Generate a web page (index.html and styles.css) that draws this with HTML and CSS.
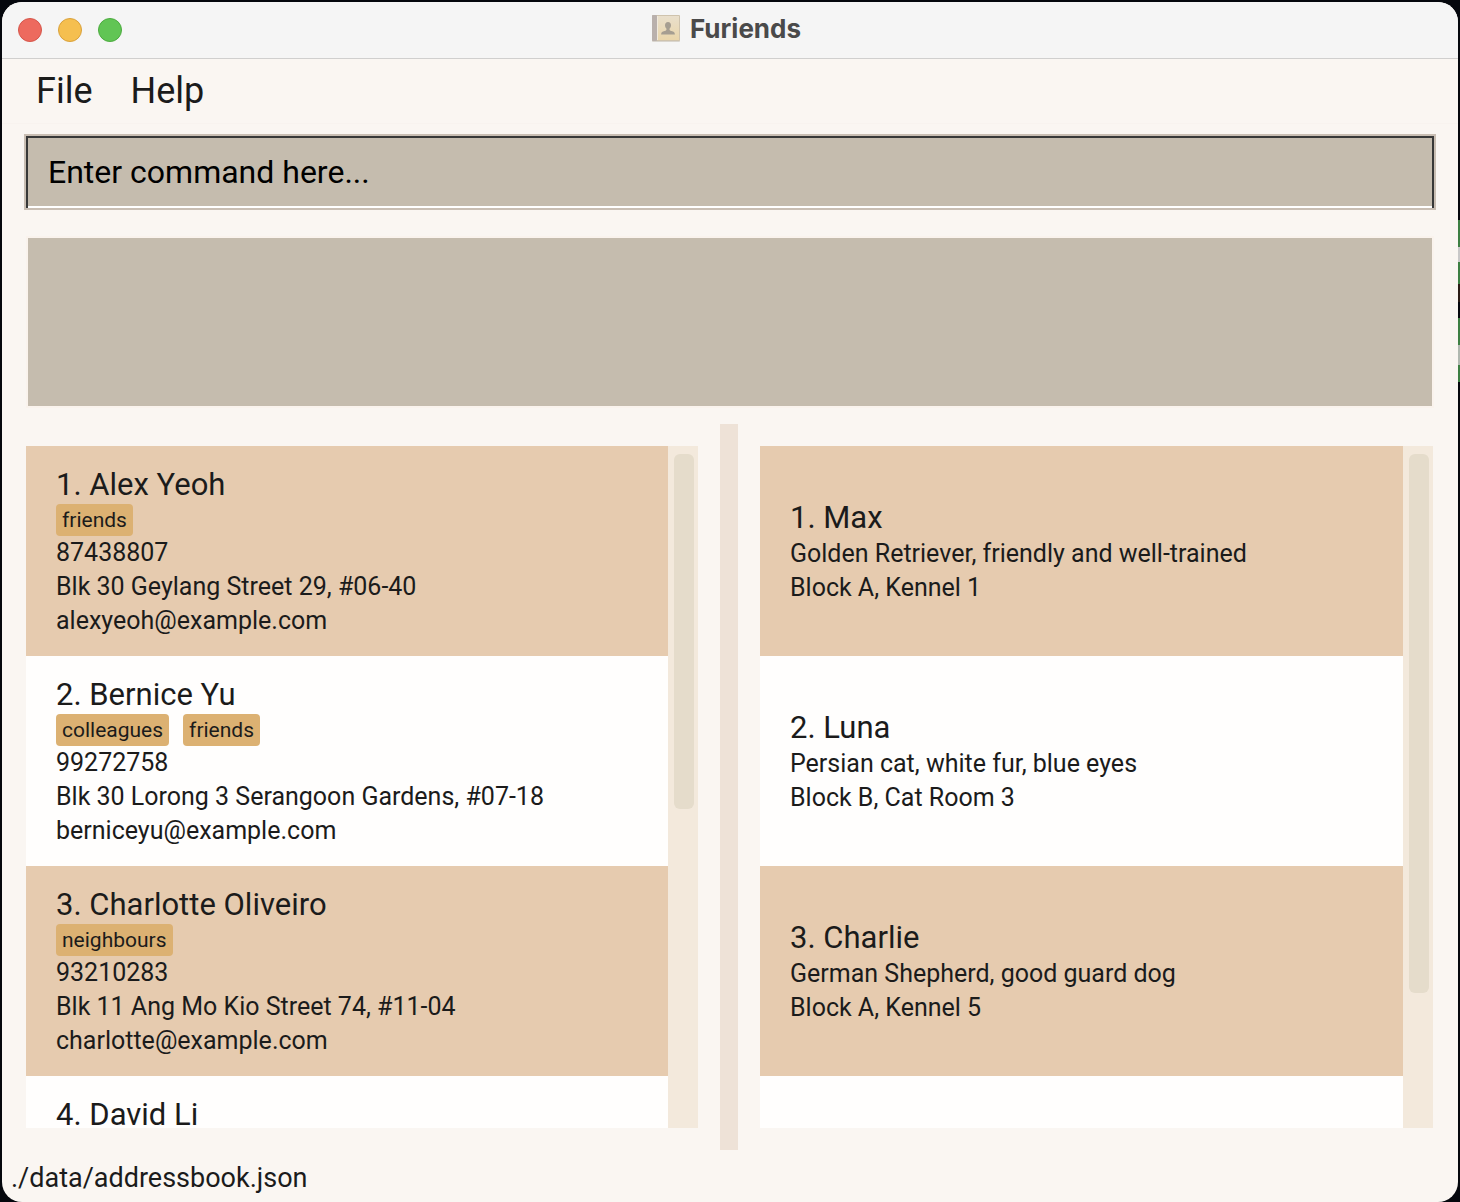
FILE: index.html
```html
<!DOCTYPE html>
<html lang="en">
<head>
<meta charset="utf-8">
<title>Furiends</title>
<link rel="stylesheet" href="styles.css">
</head>
<body>
<div class="window">
  <header class="titlebar">
    <div class="lights">
      <button class="light light-close" aria-label="Close"></button>
      <button class="light light-minimise" aria-label="Minimise"></button>
      <button class="light light-zoom" aria-label="Zoom"></button>
    </div>
    <h1 class="title">
      <svg class="book" width="30" height="30" viewBox="0 0 30 30" aria-hidden="true">
        <defs>
          <linearGradient id="cover" x1="0" y1="0" x2="0" y2="1">
            <stop offset="0" stop-color="#e9dfcc"/>
            <stop offset="1" stop-color="#ead6ab"/>
          </linearGradient>
        </defs>
        <rect x="1" y="3" width="28" height="25" rx="1" fill="#d9d5ce"/>
        <rect x="1" y="1" width="28" height="26" rx="1" fill="#cfc3ad"/>
        <rect x="1" y="1" width="5" height="26" rx="1" fill="#b9b0ac"/>
        <rect x="6" y="2" width="22" height="24" fill="url(#cover)"/>
        <rect x="6" y="2" width="1" height="24" fill="#f0e9dc"/>
        <path d="M17 8c-2 0-3 1.500-3 3.300 0 1.600.6 2.600 1.500 3.500 0 1.400-.3 1.800-2 2.300-2.200.6-3.300 1-3.400 3.400h13.800c-.1-2.400-1.200-2.800-3.400-3.400-1.700-.5-2-.9-2-2.300.9-.9 1.500-1.900 1.500-3.500C20 9.500 19 8 17 8z" fill="#a69e91"/>
      </svg>
      Furiends
    </h1>
  </header>

  <nav class="menubar">
    <button class="menu">File</button>
    <button class="menu">Help</button>
  </nav>

  <div class="command">
    <input class="command-input" type="text" placeholder="Enter command here..." aria-label="Command">
  </div>

  <div class="result">
    <output class="result-display"></output>
  </div>

  <main class="split">
    <section class="pane pane-people">
      <ul class="list">
        <li class="card">
          <h2 class="name">1. Alex Yeoh</h2>
          <div class="tags"><span class="tag">friends</span></div>
          <p class="line">87438807</p>
          <p class="line">Blk 30 Geylang Street 29, #06-40</p>
          <p class="line">alexyeoh@example.com</p>
        </li>
        <li class="card">
          <h2 class="name">2. Bernice Yu</h2>
          <div class="tags"><span class="tag">colleagues</span><span class="tag">friends</span></div>
          <p class="line">99272758</p>
          <p class="line">Blk 30 Lorong 3 Serangoon Gardens, #07-18</p>
          <p class="line">berniceyu@example.com</p>
        </li>
        <li class="card">
          <h2 class="name">3. Charlotte Oliveiro</h2>
          <div class="tags"><span class="tag">neighbours</span></div>
          <p class="line">93210283</p>
          <p class="line">Blk 11 Ang Mo Kio Street 74, #11-04</p>
          <p class="line">charlotte@example.com</p>
        </li>
        <li class="card">
          <h2 class="name">4. David Li</h2>
        </li>
      </ul>
      <div class="scrollbar"><div class="thumb thumb-people"></div></div>
    </section>
    <div class="divider"></div>
    <section class="pane pane-pets">
      <ul class="list">
        <li class="card card-pet">
          <h2 class="name">1. Max</h2>
          <p class="line">Golden Retriever, friendly and well-trained</p>
          <p class="line">Block A, Kennel 1</p>
        </li>
        <li class="card card-pet">
          <h2 class="name">2. Luna</h2>
          <p class="line">Persian cat, white fur, blue eyes</p>
          <p class="line">Block B, Cat Room 3</p>
        </li>
        <li class="card card-pet">
          <h2 class="name">3. Charlie</h2>
          <p class="line">German Shepherd, good guard dog</p>
          <p class="line">Block A, Kennel 5</p>
        </li>
        <li class="card card-pet"></li>
      </ul>
      <div class="scrollbar"><div class="thumb thumb-pets"></div></div>
    </section>
  </main>

  <footer class="status">./data/addressbook.json</footer>
</div>
</body>
</html>
```
FILE: styles.css
```css
* {
  box-sizing: border-box;
  margin: 0;
  padding: 0;
}

body {
  height: 100vh;
  padding: 2px 2px 0;
  overflow: hidden;
  background:
    linear-gradient(transparent 220px, #3d7f43 220px 247px, #c8c8c8 247px 262px, #3d7f43 262px 284px, #2a1c16 284px 302px, transparent 302px 318px, #3d7f43 318px 345px, #b0b8b0 345px 365px, #3d7f43 365px 382px, transparent 382px) right top / 2px 100% no-repeat,
    #05070d;
  font-family: Roboto, "Liberation Sans", sans-serif;
  color: #1b1b1b;
}

.window {
  display: flex;
  flex-direction: column;
  height: 100%;
  overflow: hidden;
  border-radius: 20px;
  background: #faf6f2;
}

.titlebar {
  display: grid;
  grid-template-columns: 1fr auto 1fr;
  align-items: center;
  flex: none;
  height: 57px;
  padding: 0 16px;
  border-bottom: 1px solid #d0cfce;
  background: #f5f5f5;
}

.lights {
  display: flex;
  gap: 16px;
}

.light {
  width: 24px;
  height: 24px;
  border: 1px solid;
  border-radius: 50%;
}

.light-close { background: #ed6a5e; border-color: #d5564b; }
.light-minimise { background: #f5bf4f; border-color: #d9a13c; }
.light-zoom { background: #61c554; border-color: #4cab3f; }

.title {
  display: flex;
  align-items: center;
  gap: 9px;
  padding: 0 8px 2px 0;
  font: 700 26px/32px Inter, "Liberation Sans", sans-serif;
  color: #4a4a4a;
}

.menubar {
  display: flex;
  flex: none;
  gap: 38px;
  height: 65px;
  padding: 0 34px;
  border-bottom: 1px solid #f8f3ef;
}

.menu {
  border: 0;
  background: none;
  color: inherit;
  font: 36px/64px Roboto, "Liberation Sans", sans-serif;
}

.command {
  flex: none;
  padding: 10px 22px;
}

.command-input {
  display: block;
  width: 100%;
  height: 76px;
  padding: 0 22px;
  border: 2px solid #c9beb3;
  background: #c5bcae;
  box-shadow: inset 2px 0 #383838, inset -2px 0 #383838, inset 0 2px #383838, inset 0 -2px #fff;
  color: #000;
  font: 32px/40px Roboto, "Liberation Sans", sans-serif;
}

.command-input::placeholder {
  color: #000;
  opacity: 1;
}

.result {
  flex: none;
  padding: 16px 24px;
}

.result-display {
  display: block;
  height: 172px;
  border: 2px solid #faf3ed;
  background: #c5bcae;
}

.split {
  display: grid;
  grid-template-columns: 1fr 18px 1fr;
  flex: 1;
  min-height: 0;
  padding: 0 6px 0 4px;
}

.pane {
  display: flex;
  min-width: 0;
  min-height: 0;
}

.pane-people { padding: 22px 22px 22px 20px; }
.pane-pets { padding: 22px 19px 22px 22px; }

.divider {
  background: #eee2d7;
}

.list {
  flex: 1;
  overflow: hidden;
  list-style: none;
  background: #fffefd;
}

.card {
  height: 210px;
  padding: 20px 30px 18px;
}

.card:nth-child(odd) {
  background: #e6cbaf;
}

.card-pet {
  display: flex;
  flex-direction: column;
  justify-content: center;
}

.name {
  font-size: 31px;
  line-height: 38px;
  font-weight: 400;
}

.tags {
  display: flex;
  gap: 14px;
}

.tag {
  padding: 1px 6px 0;
  border-radius: 4px;
  background: #dcb172;
  font-size: 21px;
  line-height: 31px;
}

.line {
  font-size: 25px;
  line-height: 34px;
  white-space: nowrap;
}

.scrollbar {
  flex: none;
  width: 30px;
  padding: 8px 4px 8px 6px;
  background: #f3e9dc;
}

.thumb {
  border-radius: 6px;
  background: #e5dccb;
}

.thumb-people { height: 355px; }
.thumb-pets { height: 539px; }

.status {
  flex: none;
  height: 52px;
  padding: 0 9px;
  font-size: 27px;
  line-height: 56px;
}
```
